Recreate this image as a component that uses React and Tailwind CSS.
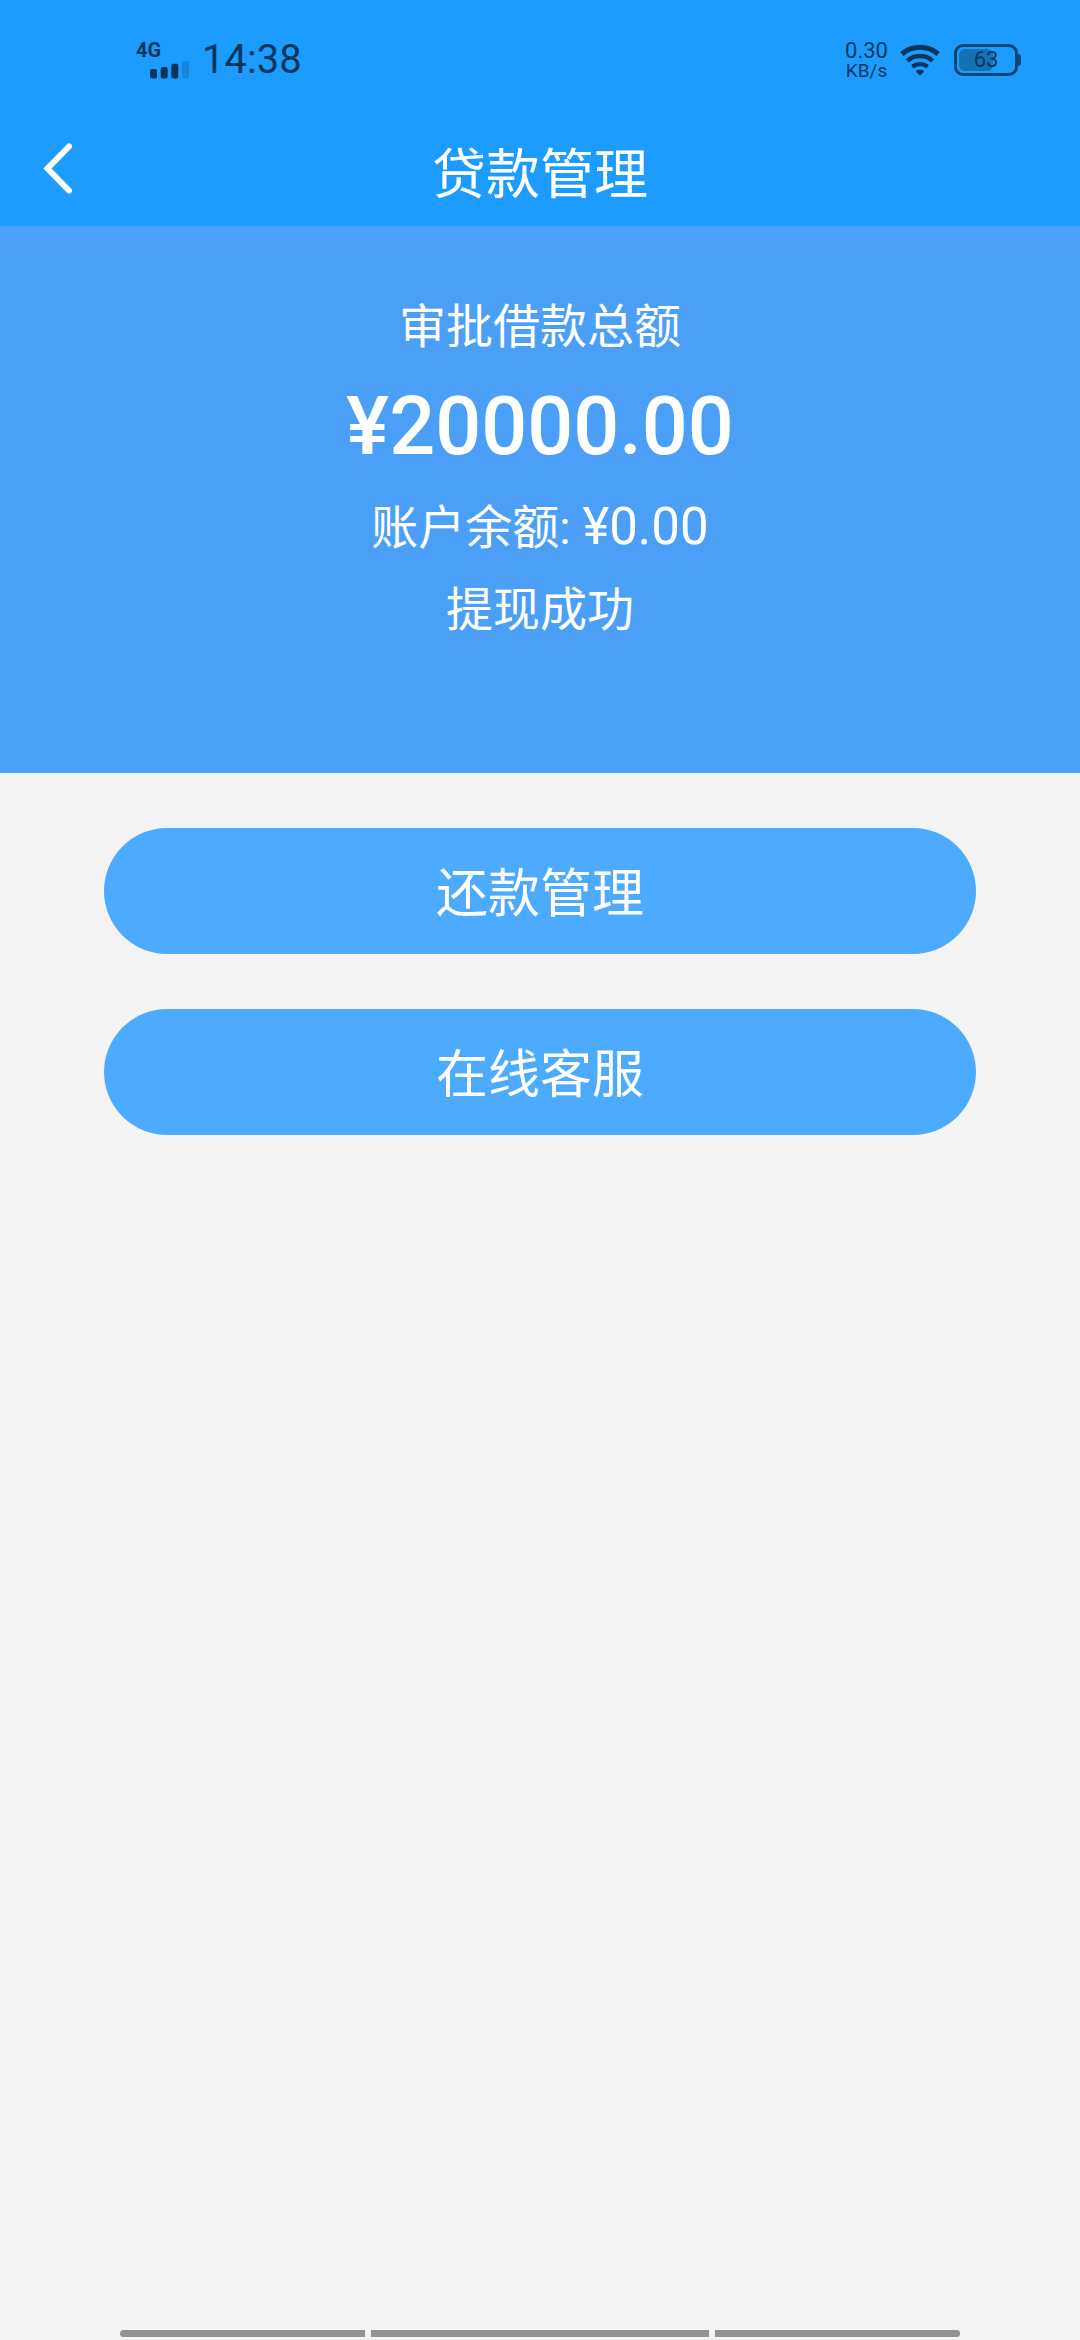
function SignalIcon() {
  return (
    <svg className="w-10 h-5" viewBox="0 0 40 20" fill="#06365c" aria-hidden="true">
      <rect x="0" y="9" width="7" height="9.5" rx="2" />
      <rect x="10.7" y="7" width="7" height="11.5" rx="2" />
      <rect x="21.3" y="3.8" width="7" height="14.7" rx="2" />
      <rect x="32" y="1" width="7" height="17.5" rx="2" fillOpacity="0.22" />
    </svg>
  );
}

function WifiIcon() {
  return (
    <svg className="w-10 h-8" viewBox="0 0 40 32" fill="none" stroke="#06365c" strokeWidth="5" aria-hidden="true">
      <path d="M1.8 10a28 28 0 0 1 36.4 0" />
      <path d="M7.2 16.8a19.6 19.6 0 0 1 25.6 0" strokeWidth="4.4" />
      <path d="M12.4 22.8a11.8 11.8 0 0 1 15.2 0" strokeWidth="4.2" />
      <path d="M20 31.6l-3.8-3.6q-.6-1.3 1-1.9 2.8-.9 5.6 0 1.6.6 1 1.9z" fill="#06365c" stroke="none" />
    </svg>
  );
}

function Battery({ level }) {
  return (
    <div className="flex items-center">
      <div className="relative w-16 h-8 rounded-[9px] border-3 border-[#0b4574] p-0.5">
        <div className="h-full rounded-md bg-[#1371b5]" style={{ width: `${level}%` }} />
        <span className="absolute inset-0 flex items-center justify-center text-[22px] leading-none text-[#06365c]">
          {level}
        </span>
      </div>
      <div className="w-[3px] h-3 rounded-r-sm bg-[#0b4574]" />
    </div>
  );
}

function StatusBar() {
  return (
    <div className="flex items-start justify-between h-30 pl-[136px] pr-[59px] pt-10 text-[#06365c]">
      <div className="flex">
        <div className="w-[54px]">
          <div className="text-[20px] leading-5 font-bold">4G</div>
          <div className="pl-[14px]">
            <SignalIcon />
          </div>
        </div>
        <div className="pl-3 text-[40px] leading-10">14:38</div>
      </div>
      <div className="flex gap-3">
        <div className="flex flex-col items-center">
          <span className="text-[22px] leading-[22px]">0.30</span>
          <span className="text-[19px] leading-[18px]">KB/s</span>
        </div>
        <div className="pt-1">
          <WifiIcon />
        </div>
        <div className="pl-0.5 pt-1">
          <Battery level={63} />
        </div>
      </div>
    </div>
  );
}

function Header() {
  return (
    <header className="bg-[#1c9cff]">
      <StatusBar />
      <div className="grid grid-cols-[120px_1fr_120px] items-start h-[106px]">
        <button type="button" aria-label="返回" className="pl-10 pt-5">
          <svg className="w-9 h-14" viewBox="0 0 36 56" fill="none" stroke="#fff" strokeWidth="6" strokeLinecap="round" strokeLinejoin="miter">
            <path d="M29 6.5L7.5 28.5L29 50.5" />
          </svg>
        </button>
        <h1 className="pt-6 text-center text-[54px] leading-[64px]">贷款管理</h1>
      </div>
    </header>
  );
}

function Summary() {
  return (
    <section className="flex flex-col items-center h-[547px] pt-[68px] bg-[#4b9ff6]">
      <p className="text-[47px] leading-[66px]">审批借款总额</p>
      <p className="text-[81px] leading-[134px] font-medium">¥20000.00</p>
      <p className="text-[47px] leading-[66px]">
        账户余额: <span className="text-[51px]">¥0.00</span>
      </p>
      <p className="pt-4 text-[47px] leading-[66px]">提现成功</p>
    </section>
  );
}

const actions = ["还款管理", "在线客服"];

export default function App() {
  return (
    <div className="flex flex-col min-h-screen bg-[#f4f4f4] text-white font-[Roboto,'Noto_Sans_CJK_SC',sans-serif]">
      <Header />
      <Summary />

      <main className="flex flex-col flex-1 gap-[55px] px-[104px] pt-[55px]">
        {actions.map((label) => (
          <button
            key={label}
            type="button"
            className="h-[126px] pt-2 rounded-full bg-[#4cabff] text-[52px] leading-[64px]"
          >
            {label}
          </button>
        ))}
      </main>

      {/* gesture navigation hint */}
      <div className="grid grid-cols-[245fr_338fr_245fr] gap-1.5 h-[10px] px-[120px] pb-[3px]">
        <div className="rounded-l-full bg-[#939393]" />
        <div className="bg-[#939393]" />
        <div className="rounded-r-full bg-[#939393]" />
      </div>
    </div>
  );
}
